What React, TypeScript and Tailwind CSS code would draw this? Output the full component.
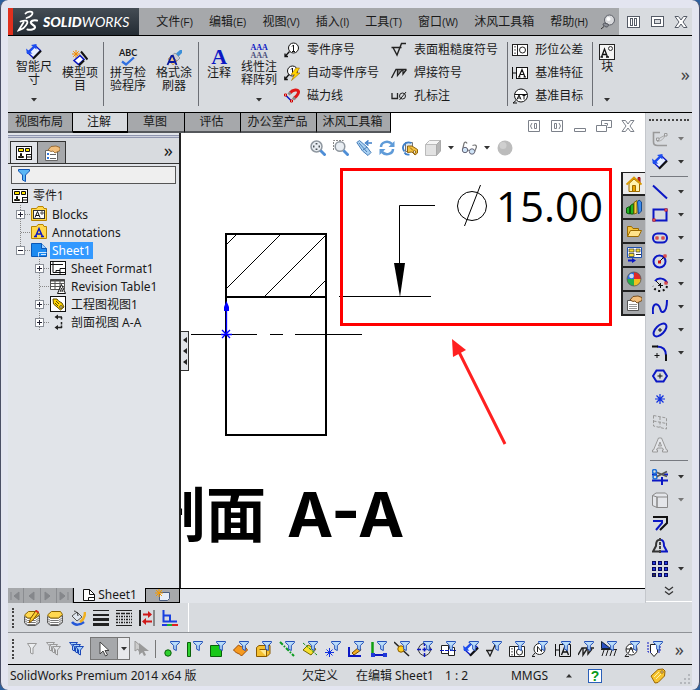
import type { ReactNode } from "react";
import clsx from "clsx";

const BLUE = "#0b17c4";

function Svg({ children, box = 16, className }: { children: ReactNode; box?: number; className?: string }) {
  return (
    <svg width={box} height={box} viewBox={`0 0 ${box} ${box}`} fill="none" aria-hidden="true" className={clsx("shrink-0", className)}>
      {children}
    </svg>
  );
}

function Caret({ muted }: { muted?: boolean }) {
  return (
    <svg width="6" height="4" viewBox="0 0 6 4" aria-hidden="true" className="shrink-0">
      <path d="M0 0h6L3 3.500z" fill={muted ? "#777" : "#333"} />
    </svg>
  );
}

function Grip({ across }: { across?: boolean }) {
  return <span className={clsx("shrink-0 border-dotted border-[#444]", across ? "w-10 border-t-2" : "h-5 border-l-2")} />;
}

const dimension = (
  <>
    <path d="M1.500 8.500 9 1.500l5.500 5L7.500 14z" fill="#e8f0ff" stroke={BLUE} strokeWidth="1.300" />
    <path d="m3 8 6-6" stroke="#1d4ef0" strokeWidth="2.200" />
    <path d="M0 4.500 1 10l5.500-.5zM5 1l5.500-1v5.500z" fill="#1d4ef0" />
    <path d="m7 14.800 8-8" stroke="#111" strokeWidth="2.200" />
  </>
);

/* ---------- title bar ---------- */

const menus = [
  ["文件", "(F)"],
  ["编辑", "(E)"],
  ["视图", "(V)"],
  ["插入", "(I)"],
  ["工具", "(T)"],
  ["窗口", "(W)"],
  ["沐风工具箱", ""],
  ["帮助", "(H)"],
];

function WindowGlyph({ kind }: { kind: "panes" | "restore" | "close" }) {
  return (
    <Svg box={14}>
      {kind === "panes" && (
        <g stroke="#555b66">
          <rect x=".5" y="1.500" width="12" height="11" fill="#fff" />
          <rect x="3.500" y="3.500" width="2" height="7" />
          <rect x="7.500" y="3.500" width="2" height="7" />
        </g>
      )}
      {kind === "restore" && (
        <g stroke="#555b66">
          <rect x=".5" y="1.500" width="12" height="10" fill="#fff" />
          <rect x="3.500" y="4.500" width="6" height="4" fill="#d7dade" />
        </g>
      )}
      {kind === "close" && (
        <path d="M1 1.500h3.500L7 5l2.500-3.500H13L9 7l4 5.500H9.500L7 9l-2.500 3.500H1L5 7z" fill="#fff" stroke="#555b66" />
      )}
    </Svg>
  );
}

function TitleBar() {
  return (
    <header className="flex h-7 border-b border-black bg-[#a6a8ab]">
      <div className="flex shrink-0 items-center border-l-[5px] border-[#e0301e] bg-linear-to-b from-[#454d55] to-[#242c34] pr-2.5 pl-1">
        <svg width="22" height="23" viewBox="0 0 22 23" fill="none" stroke="#fff" strokeLinecap="round" aria-hidden="true">
          <path d="M8.500 3.500C10 1.500 15.500.8 15.500 3 15.500 5 12.500 7 9.500 8" strokeWidth="1.800" />
          <path d="M3.500 11.500c5-1.800 8-1 6.500 2.200C8.500 17 5 19.500 1.500 20.500L6.500 12.500" strokeWidth="1.800" />
          <path d="M20 10.500c-4-.8-6.500.5-6 2.500.5 2 4.500 2.300 4 4.500-.5 2-4.500 2.600-7.500 2" strokeWidth="2.200" />
        </svg>
        <span className="ml-1 font-['Lato',sans-serif] text-sm text-white italic">
          <b className="font-black">SOLID</b>WORKS
        </span>
      </div>
      <nav className="flex flex-1 items-center gap-4 pl-[17px]">
        {menus.map(([name, key]) => (
          <button key={name} className="whitespace-nowrap">
            {name}
            <span className="font-['Liberation_Sans',sans-serif] text-[10px]">{key}</span>
          </button>
        ))}
        <button aria-label="固定菜单" className="-ml-1">
          <Svg>
            <circle cx="9.500" cy="6" r="5" fill="#d9dadd" stroke="#5d6068" />
            <circle cx="8.500" cy="5" r="2" fill="#fff" />
            <path d="M6 9.500c-2-1-3 0-3 1.500l3 2c2 0 3-1 2-3z" fill="#8d9098" stroke="#55585f" />
            <path d="m4 12.500-3 2.500" stroke="#333" />
          </Svg>
        </button>
      </nav>
      <div className="flex w-[73px] shrink-0 items-center justify-between bg-[#d8dbdf] pr-1 pl-2">
        <button aria-label="最小化"><WindowGlyph kind="panes" /></button>
        <button aria-label="还原"><WindowGlyph kind="restore" /></button>
        <button aria-label="关闭"><WindowGlyph kind="close" /></button>
      </div>
    </header>
  );
}

/* ---------- ribbon ---------- */

function BigButton({ icon, lines, menu, low }: { icon: ReactNode; lines: string[]; menu?: boolean; low?: boolean }) {
  return (
    <button className={clsx("flex h-full shrink-0 flex-col items-center leading-[13px]", low ? "pt-3.5" : "pt-2")}>
      <span className="flex h-4 items-end justify-center">{icon}</span>
      {lines.map((line) => (
        <span key={line} className="whitespace-nowrap">{line}</span>
      ))}
      {menu && <span className="mt-auto pb-2.5"><Caret /></span>}
    </button>
  );
}

function SmallButton({ icon, label }: { icon: ReactNode; label: string }) {
  return (
    <button className="flex h-[23px] items-center gap-[7px] whitespace-nowrap">
      {icon}
      {label}
    </button>
  );
}

const Divider = () => <span className="h-16 w-px shrink-0 self-center bg-[#6c6f75]" />;

const balloonIcon = (
  <Svg>
    <circle cx="9.500" cy="6" r="5" fill="#fff" stroke="#111" />
    <path d="M8 4.500 9.500 3v6.500M8 9.500h3" stroke="#111" />
    <path d="M5.500 9.500 1 14.500m0-3v3h3" stroke="#111" strokeWidth="1.300" />
  </Svg>
);
const autoBalloonIcon = (
  <Svg>
    <circle cx="8.500" cy="6" r="5" fill="#fff" stroke="#111" />
    <path d="M7 4.500 8.500 3v6" stroke="#111" />
    <path d="M5 9.500.800 14.500m0-3v3h3" stroke="#111" strokeWidth="1.300" />
    <path d="m12 3-5 6.500h3.500l-3 6L16 8h-3.500L15.500 3z" fill="#ffd400" stroke="#a06a00" strokeWidth=".6" />
  </Svg>
);
const magnetIcon = (
  <Svg>
    <path d="m1.500 7 6 6" stroke={BLUE} strokeWidth="1.500" />
    <path d="M6 5c3-4 8-3.500 8.500-1.500.4 2.500-2 4.500-4.500 7" stroke="#e01818" strokeWidth="3" />
    <path d="m4.500 6.500 2-2M9 11.500l2-2" stroke="#888" strokeWidth="3" />
    <path d="M.5 6h2v2h-2zM6.500 12h2v2h-2z" fill="#fff" stroke="#c00" />
  </Svg>
);
const surfaceIcon = (
  <Svg>
    <path d="M.5 5.500h10M2 5.500 6 13l4.500-11.500H15" stroke="#222" strokeWidth="1.400" />
  </Svg>
);
const weldIcon = (
  <Svg>
    <path d="M.5 13 5 4.500h10.500M6.500 4.500v6l5-6M12 4.500v4.500l3.500-4.500" stroke="#222" strokeWidth="1.300" />
    <path d="M7 5h3l-3 4z" fill="#777" />
  </Svg>
);
const holeIcon = (
  <Svg>
    <path d="M1 5v5.500h5.500V5" stroke="#222" strokeWidth="1.300" />
    <circle cx="11.500" cy="8" r="3" stroke="#222" />
    <path d="m8.500 12 6.500-8" stroke="#222" />
  </Svg>
);
const toleranceIcon = (
  <Svg>
    <rect x=".5" y="2.500" width="15" height="11" fill="#fff" stroke="#222" />
    <path d="M5.500 2.500v11M3 4v1.500M3 7.200v1.500M3 10.500V12" stroke="#222" />
    <circle cx="10.500" cy="8" r="3" stroke="#222" />
  </Svg>
);
const datumIcon = (
  <Svg>
    <path d="M.5 2v12M.5 8h4" stroke="#111" />
    <rect x="4.500" y="2.500" width="11" height="11" fill="#fff" stroke="#111" />
    <path d="m7 12 3-7.500 3 7.500M8 9.500h4M6 12h2.500M11.500 12H14" stroke="#111" strokeWidth="1.200" />
  </Svg>
);
const targetIcon = (
  <Svg>
    <circle cx="9" cy="7.500" r="6.500" fill="#fff" stroke="#111" />
    <path d="M3 6.500h12M5 11.500l2-4.500 2 4.500M5.700 10h2.600M12 7.500v4M10.500 7.500h3" stroke="#111" />
    <path d="m4 12.500-3 2.500h4" stroke="#111" />
  </Svg>
);

function Ribbon() {
  return (
    <div className="flex h-[77px] items-stretch border-b border-black bg-[#d8dbdf] pl-2" role="toolbar" aria-label="注解工具">
      <div className="flex gap-2.5">
        <BigButton icon={<Svg>{dimension}</Svg>} lines={["智能尺", "寸"]} menu />
        <BigButton
          low
          icon={
            <Svg>
              <path d="M4 0v8M0 4h8M1.200 1.200l5.600 5.600M6.800 1.200 1.200 6.800" stroke="#f08a00" />
              <path d="m2 10.500 6-5 4 4-5.500 5z" fill="#fff" stroke={BLUE} strokeWidth="1.600" />
              <path d="m9 1.500 6.500 8M7 15.500l5-5" stroke="#111" strokeWidth="2" />
            </Svg>
          }
          lines={["模型项", "目"]}
        />
      </div>
      <span className="w-[5px]" />
      <Divider />
      <div className="flex gap-2.5 px-1.5">
        <BigButton
          low
          icon={
            <span className="flex flex-col items-center">
              <span className="font-['Lato',sans-serif] text-[9px] leading-[8px] font-bold">ABC</span>
              <svg width="14" height="9" viewBox="0 0 14 9" fill="none" aria-hidden="true">
                <path d="m1 4.500 4 3L13 .5" stroke="#2f6fe0" strokeWidth="2.200" />
              </svg>
            </span>
          }
          lines={["拼写检", "验程序"]}
        />
        <BigButton
          low
          icon={
            <Svg>
              <path d="m10 3.500 4-3.500h2v3l-3.500 3.500z" fill="#3c8fd8" />
              <path d="m5 6 4-3 5 5-3 3z" fill="#c9cdd4" stroke="#7b828c" strokeWidth=".7" />
              <path d="m5 6 6 5-4 4-5-6z" fill="#f0c98a" stroke="#a77b3b" strokeWidth=".6" />
              <path d="m1.500 15 4-9h1.500l3.500 9M3.500 12h5" stroke="#0a1a9c" strokeWidth="1.800" />
            </Svg>
          }
          lines={["格式涂", "刷器"]}
        />
      </div>
      <Divider />
      <div className="flex gap-2.5 pr-[7px] pl-2">
        <BigButton
          low
          icon={<span className="font-['Liberation_Serif',serif] text-[22px] leading-[18px] font-bold text-[#0b17c4]">A</span>}
          lines={["注释"]}
        />
        <BigButton
          icon={
            <span className="flex flex-col font-['Liberation_Serif',serif] text-[8px] leading-[8px] font-bold text-[#0b17c4]">
              <span>AAA</span>
              <span className="text-[#4a4f7c]">AAA</span>
            </span>
          }
          lines={["线性注", "释阵列"]}
          menu
        />
      </div>
      <div className="flex flex-col pt-0.5">
        <SmallButton icon={balloonIcon} label="零件序号" />
        <SmallButton icon={autoBalloonIcon} label="自动零件序号" />
        <SmallButton icon={magnetIcon} label="磁力线" />
      </div>
      <div className="flex flex-col pt-0.5 pr-[9px] pl-3">
        <SmallButton icon={surfaceIcon} label="表面粗糙度符号" />
        <SmallButton icon={weldIcon} label="焊接符号" />
        <SmallButton icon={holeIcon} label="孔标注" />
      </div>
      <Divider />
      <div className="flex flex-col pt-0.5 pr-[9px] pl-1">
        <SmallButton icon={toleranceIcon} label="形位公差" />
        <SmallButton icon={datumIcon} label="基准特征" />
        <SmallButton icon={targetIcon} label="基准目标" />
      </div>
      <Divider />
      <div className="px-1.5">
        <BigButton
          icon={
            <Svg>
              <rect x=".5" y=".5" width="15" height="15" fill="#f4f4f4" stroke="#222" />
              <path d="m2.500 13 3-8 3 8M3.500 10.500h4M1.500 13h2.500M7 13h3" stroke="#111" strokeWidth="1.300" />
              <circle cx="11.500" cy="4.500" r="2" stroke="#333" />
            </Svg>
          }
          lines={["块"]}
          menu
        />
      </div>
      <button aria-label="更多" className="ml-auto self-center pr-0.5 text-lg leading-none text-[#444]">»</button>
    </div>
  );
}

/* ---------- command tabs ---------- */

const tabs = ["视图布局", "注解", "草图", "评估", "办公室产品", "沐风工具箱"];
const tabWidths = ["w-[65px]", "w-[55px]", "w-[57px]", "w-14", "w-[76px]", "w-[74px]"];

function CommandTabs() {
  return (
    <div className="flex h-5 items-stretch bg-white">
      <div className="flex" role="tablist">
        {tabs.map((tab, i) => (
          <button
            key={tab}
            role="tab"
            aria-selected={i === 1}
            className={clsx(
              "border-r border-b-2 border-r-black pr-0.5 leading-4 whitespace-nowrap",
              tabWidths[i],
              i === 1 ? "border-b-black bg-[#d8dbdf]" : "border-b-[#55585c] bg-[#a6a8ab]",
            )}
          >
            {tab}
          </button>
        ))}
      </div>
      <div className="ml-auto flex items-end gap-[9px] pr-2.5 text-[#7c818a]">
        <button aria-label="左侧窗格">
          <Svg box={14}><path d="M1.500 1.500h11v11h-11zM5 4 3.500 7 5 10M7.500 4.500h2v5h-2z" stroke="currentColor" /></Svg>
        </button>
        <button aria-label="右侧窗格">
          <Svg box={14}><path d="M1.500 1.500h11v11h-11zM9 4l1.500 3L9 10M4.500 4.500h2v5h-2z" stroke="currentColor" /></Svg>
        </button>
        <button aria-label="最小化文档">
          <Svg box={14}><path d="M1.500 9.500h11v3h-11z" stroke="currentColor" /></Svg>
        </button>
        <button aria-label="还原文档">
          <Svg box={16}><path d="M5.500 8.500v-5h10v7h-4M.5 8.500h10v6H.500zM8.500 6.500h3v2" stroke="currentColor" /></Svg>
        </button>
        <button aria-label="关闭文档">
          <Svg box={14}>
            <path d="M1 1.500h3.500L7 5l2.500-3.500H13L9 7l4 5.500H9.500L7 9l-2.500 3.500H1L5 7z" fill="#fff" stroke="currentColor" />
          </Svg>
        </button>
      </div>
    </div>
  );
}

/* ---------- feature tree ---------- */

const drawingIcon = (
  <Svg>
    <rect x=".5" y="1.500" width="15" height="13" fill="#fff" stroke="#111" />
    <path d="M2.500 3.500h5v3h-5zM9.500 3.500h4v3h-4zM4.500 8.500v3h-2v1h5v-1h-2v-3z" fill="#ffe500" stroke="#111" />
    <path d="M10.500 9.500h5M10.500 9v5.500M10.500 12h5" stroke="#111" />
  </Svg>
);
const folderShape = <path d="M.5 2.500h5l1.500-2h5l1 2h2.500v12H.500z" fill="#ffd84d" stroke="#b98500" />;

const treeIcons: Record<string, ReactNode> = {
  blocks: (
    <Svg>
      {folderShape}
      <rect x="2.500" y="4.500" width="11" height="8" fill="#fff" stroke="#333" />
      <path d="m4 11.500 2.500-6 2.500 6M5 9.500h3" stroke="#111" />
      <circle cx="11" cy="7" r="1.200" stroke="#111" strokeWidth=".8" />
    </Svg>
  ),
  notes: (
    <Svg>
      {folderShape}
      <path d="m4.500 12.500 3.500-8 3.500 8M5.500 10h5M3 12.500h3M10 12.500h3" stroke={BLUE} strokeWidth="1.500" />
    </Svg>
  ),
  sheet: (
    <Svg>
      <path d="M.5 1.500h10l5 5v8H.500z" fill="#1c8af0" stroke="#0b57b5" />
      <path d="M10.500 1.500v5h5" fill="#9fd0ff" stroke="#0b57b5" />
      <path d="M7.500 14.500v-4h8M10 12.500h5" stroke="#cfe6ff" />
    </Svg>
  ),
  format: (
    <Svg>
      <rect x=".5" y="1.500" width="15" height="13" fill="#fff" stroke="#111" />
      <path d="M3 1v11.500h3v-2h4v-2h6M0 4.500h13M6 12.500h10M10 10.500v4" stroke="#111" />
    </Svg>
  ),
  revision: (
    <Svg>
      <path d="M.5 1.500h14v10H.500z" fill="#fff" stroke="#555" />
      <path d="M0 2.500h15" stroke="#444" strokeWidth="2" />
      <path d="M5 2v10M10 2v10M0 5.500h15M0 8.500h15" stroke="#555" />
      <path d="m7.500 15.500 4-9 4 9z" fill="#fff" stroke="#111" />
      <path d="m10 14 1.500-4 1.500 4M10.500 13h2" stroke="#111" strokeWidth=".8" />
    </Svg>
  ),
  view: (
    <Svg>
      <rect x=".5" y=".5" width="15" height="15" fill="#fff" stroke="#111" />
      <path d="M3 3h4l1.500 2L12 7l2 4-3.500 3L7 11 3.500 8z" fill="#ffd500" stroke="#5d4900" />
      <path d="m6 5 3 3M5 7l3 3" stroke="#5d4900" />
      <circle cx="11" cy="11" r="1.300" fill="#fff" stroke="#5d4900" />
    </Svg>
  ),
  section: (
    <Svg>
      <path d="M12 3H6.500M12 13.500H6.500" stroke="#222" strokeWidth="1.500" />
      <path d="M4.500 3 8 .5v5zM4.500 13.500 8 11v5z" fill="#222" />
      <path d="M11.500 3v3M11.500 8v6" stroke="#222" strokeWidth="1.500" strokeDasharray="2.500 1" />
    </Svg>
  ),
};

interface Node {
  icon: string;
  label: string;
  sign?: "+" | "-";
  selected?: boolean;
  deep?: boolean;
}

const nodes: Node[] = [
  { icon: "blocks", label: "Blocks", sign: "+" },
  { icon: "notes", label: "Annotations" },
  { icon: "sheet", label: "Sheet1", sign: "-", selected: true },
  { icon: "format", label: "Sheet Format1", sign: "+", deep: true },
  { icon: "revision", label: "Revision Table1", deep: true },
  { icon: "view", label: "工程图视图1", sign: "+", deep: true },
  { icon: "section", label: "剖面视图 A-A", sign: "+", deep: true },
];

function TreeRow({ node }: { node: Node }) {
  return (
    <li className={clsx("flex h-[18px] items-center", node.deep ? "pl-[26px]" : "pl-[7px]")}>
      <svg width="16" height="18" viewBox="0 0 16 18" fill="none" aria-hidden="true" className="shrink-0">
        <path d={node.sign === "-" ? "M5.500 0v9" : "M5.500 0v18"} stroke="#888" strokeDasharray="1 1" />
        <path d="M6 9.500h10" stroke="#888" strokeDasharray="1 1" />
        {node.sign && (
          <>
            <rect x="1.500" y="5.500" width="8" height="8" fill="#fff" stroke="#8a8f98" />
            <path d={node.sign === "+" ? "M3 9.500h5M5.500 7v5" : "M3 9.500h5"} stroke="#223" />
          </>
        )}
      </svg>
      {treeIcons[node.icon]}
      <span className={clsx("ml-[3px] px-0.5 leading-[17px] whitespace-nowrap", node.selected && "bg-[#3399ff] text-white")}>
        {node.label}
      </span>
    </li>
  );
}

function FeaturePanel() {
  return (
    <aside className="flex w-[173px] shrink-0 flex-col border-r-2 border-[#222] bg-[#e1e4e9]">
      <div className="mt-0.5 h-[3px] border-y border-[#8f95ae] bg-[#cfd3e0]" />
      <div className="flex h-[26px] items-end border-b border-[#333] bg-[#d8dbdf] pl-0.5" role="tablist">
        <button role="tab" aria-selected="true" aria-label="工程图" className="flex h-[22px] w-7 items-center justify-center border-x border-t border-[#333] bg-[#e1e4e9]">
          {drawingIcon}
        </button>
        <button role="tab" aria-selected="false" aria-label="属性" className="flex h-[22px] w-7 items-center justify-center border-t border-r border-[#333] bg-[#a6a8ab]">
          <Svg>
            <path d="M1.500 5.500h12v10h-12z" fill="#fff" stroke="#666" />
            <path d="M6 9.500h6M6 13.500h6" stroke="#666" />
            <path d="M3 8h2v2H3zM3 12h2v2H3z" fill="#3476d8" />
            <path d="M4 5 7 1.500 12 1l4 1.500v3L11 8 9 6 7 6.500z" fill="#f2bf7d" stroke="#8a5a20" strokeWidth=".8" />
          </Svg>
        </button>
        <button aria-label="展开" className="mr-1.5 ml-auto pb-1 text-lg leading-none">»</button>
      </div>
      <label className="mx-[3px] mt-0.5 flex h-[18px] items-center border border-[#555] bg-[#efefef] pl-1">
        <Svg><path d="M2.500 2.500h11v1.500L9.500 8v6.500l-3-1.500V8l-4-4z" fill="#5ab6f5" stroke="#1356b4" /></Svg>
        <input aria-label="筛选" className="w-full min-w-0 bg-transparent pl-1 outline-none" />
      </label>
      <div className="mt-[3px] flex h-[18px] items-center gap-[5px] pl-1">
        {drawingIcon}
        <span>零件1</span>
      </div>
      <ul>
        {nodes.map((node) => <TreeRow key={node.label} node={node} />)}
      </ul>
    </aside>
  );
}

/* ---------- drawing canvas ---------- */

function Drawing() {
  return (
    <svg width="464" height="455" viewBox="181 133 464 455" fill="none" className="absolute top-0 left-0">
      <g stroke="#000" strokeWidth="2">
        <rect x="226" y="234" width="100" height="201" />
        <path d="M226 297h100" />
      </g>
      <path d="m227 244 9-9M227 288l53-53M264 297l62-62M309 297l17-17" stroke="#000" />
      <path d="M191 334.500h66M270 334.500h13M295 334.500h67" stroke="#000" />
      <path d="M226.500 334v-26M222 330l8 8M230 330l-8 8M221 334.500h11" stroke="#0000ff" strokeWidth="1.300" />
      <path d="m226.500 301 2.500 6v4h-5v-4z" fill="#0000ff" />

      <path d="M435 205.500h-35.500V263M339 296.500h92" stroke="#000" />
      <path d="M394 263h11l-5 34z" fill="#000" />
      <circle cx="472" cy="206" r="14.500" stroke="#000" />
      <path d="m480.500 185-16 41" stroke="#000" />
      <text x="496" y="222" fontSize="42" fill="#000" className="font-['Open_Sans',sans-serif]">15.00</text>

      <rect x="341.500" y="169.500" width="269" height="155" stroke="#ff0000" strokeWidth="3" />
      <path d="m505 444-46-92" stroke="#ff2020" strokeWidth="3" />
      <path d="m452 339 14 11-13 7z" fill="#ff2020" />

      <text x="146" y="537" fontSize="60" fontWeight="700" fill="#000" className="font-['Noto_Sans_CJK_SC',sans-serif]">剖面</text>
      <text x="287" y="537" fontSize="62" fontWeight="700" fill="#000" className="font-['Inter',sans-serif]">A-A</text>
    </svg>
  );
}

const viewTools: { label: string; icon: ReactNode; menu?: boolean }[] = [
  {
    label: "整屏显示",
    icon: (
      <Svg>
        <circle cx="6.500" cy="6.500" r="5.500" fill="#e9eef3" stroke="#8f979f" strokeWidth="1.500" />
        <path d="M6.500 3v1.500M6.500 8.500V10M3 6.500h1.500M8.500 6.500H10" stroke="#4d5359" strokeWidth="1.800" />
        <path d="m10.500 10.500 5 5" stroke="#4f8ed6" strokeWidth="2.800" />
      </Svg>
    ),
  },
  {
    label: "局部放大",
    icon: (
      <Svg>
        <path d="M.5 10V.5h10" stroke="#888" strokeDasharray="2 1" />
        <circle cx="7" cy="6.500" r="4.800" fill="#e9eef3" stroke="#8f979f" strokeWidth="1.500" />
        <path d="m10.500 10.500 5 5" stroke="#4f8ed6" strokeWidth="2.800" />
      </Svg>
    ),
  },
  {
    label: "上一视图",
    icon: (
      <Svg>
        <path d="m.8 2.500 2.700-2L11 7l4 5.500-3 3L6.500 11z" fill="#a8d0f2" stroke="#4a7fb8" />
        <path d="m3 3 8 9M7 10l4-3" stroke="#4a7fb8" />
        <path d="M16 3h-5M12.500.5 9.500 3l3 2.500" stroke="#3f7fc8" strokeWidth="1.500" />
      </Svg>
    ),
  },
  {
    label: "旋转视图",
    icon: (
      <Svg>
        <path d="M2 7c0-5 7-7 11-3M14 9c0 5-7 7-11 3" stroke="#5f9bd8" strokeWidth="2.500" />
        <path d="M15.500 1v6h-6zM.5 15V9h6z" fill="#5f9bd8" />
      </Svg>
    ),
  },
  {
    label: "三维工程图",
    icon: (
      <Svg>
        <path d="M3.500 2.500h7v9h-7z" fill="#dfe8f0" stroke="#777" />
        <path d="M2.500 11.500c-4-5 1-11 7-8.500M2.500 12.500c1 2 3 2.500 5 2" stroke="#3f7fc8" strokeWidth="1.800" />
        <path d="M5.500 6h4.500l5.500 3.500V13L13 15l-3-3-4.500.5z" fill="#f5c242" stroke="#8f6410" />
        <path d="m8 7.500 3 3" stroke="#8f6410" />
        <circle cx="12.500" cy="12" r="1.300" fill="#fff" stroke="#8f6410" />
      </Svg>
    ),
  },
  {
    label: "显示样式",
    menu: true,
    icon: (
      <Svg>
        <path d="m.5 4.500 4-4h11l-4 4z" fill="#f4f4f4" stroke="#bbb" />
        <path d="M.5 4.500h11v11H.500z" fill="#e2e2e2" stroke="#bbb" />
        <path d="m11.500 4.500 4-4v10.500l-4 4.500z" fill="#b5b5b5" stroke="#aaa" />
      </Svg>
    ),
  },
  {
    label: "隐藏项目",
    menu: true,
    icon: (
      <Svg>
        <path d="M1.500 10 3 3.500C3.500 1.500 5.500 2 6 3.500M13.500 12l2-5c0-2-2-2.500-4-1.500M6.500 10l2 .5" stroke="#777" strokeWidth="1.200" />
        <circle cx="4" cy="10" r="2.700" fill="#cfe4f7" stroke="#667" />
        <circle cx="11" cy="11.500" r="2.700" fill="#cfe4f7" stroke="#667" />
      </Svg>
    ),
  },
  {
    label: "外观",
    icon: (
      <Svg>
        <circle cx="8" cy="8" r="7.500" fill="#bcbcbc" />
        <circle cx="6" cy="5.500" r="3.500" fill="#cfcfcf" />
      </Svg>
    ),
  },
];

const paneIcons: { label: string; icon: ReactNode }[] = [
  {
    label: "资源",
    icon: (
      <Svg>
        <path d="M12 1.500h2V7h-2z" fill="#e03030" stroke="#901010" />
        <path d="M3 7.500 8 3l5.500 4.500v8H3z" fill="#fff2b0" stroke="#9c6b00" />
        <path d="m.5 8.500 7.500-7 7.500 7" stroke="#d99a00" strokeWidth="1.800" />
        <path d="M6.500 9.500h3v6h-3z" fill="#e8a200" stroke="#9c6b00" />
      </Svg>
    ),
  },
  {
    label: "设计库",
    icon: (
      <Svg>
        <path d="m.5 9 3-1.500V15l-3-1zM4.500 6.500l3-2V15h-3z" fill="#22b422" stroke="#0b5a0b" />
        <path d="m8 3.500 3-2V14l-3 1z" fill="#f3d040" stroke="#80650a" />
        <path d="m11.500 3 1.500-2 2.500 2V12l-3 3z" fill="#3d8cf0" stroke="#164b91" />
      </Svg>
    ),
  },
  {
    label: "文件探索器",
    icon: (
      <Svg>
        <path d="M1.500 13.500v-10h4l1.500 2h5.500v3" fill="#f5c542" stroke="#9c6b00" />
        <path d="m1.500 13.500 3-6h11l-3 6z" fill="#ffe38a" stroke="#9c6b00" />
      </Svg>
    ),
  },
  {
    label: "视图调色板",
    icon: (
      <Svg>
        <path d="M1.500.5h14v10h-14z" fill="#fff" stroke="#1d4fb0" />
        <path d="M3 2h5v3H3zM10 2h4v3h-4zM3 6.500h5v3H3z" fill="#f5dc30" stroke="#333" strokeWidth=".7" />
        <path d="M10 7.500h5" stroke="#333" />
        <path d="M2 13.500h5" stroke={BLUE} strokeWidth="2" />
        <path d="m6 11 4 2.500L6 16z" fill={BLUE} />
      </Svg>
    ),
  },
  {
    label: "外观、布景",
    icon: (
      <Svg>
        <path d="M8 8V1a7 7 0 0 0-7 7z" fill="#2a6fe0" />
        <path d="M8 8V1a7 7 0 0 1 7 7z" fill="#e02828" />
        <path d="M8 8H1a7 7 0 0 0 7 7z" fill="#24b04a" />
        <path d="M8 8h7a7 7 0 0 1-7 7z" fill="#f0c020" />
        <circle cx="5.500" cy="5" r="2.300" fill="#fff" opacity=".75" />
        <circle cx="8" cy="8" r="7" stroke="#555" strokeWidth=".8" />
      </Svg>
    ),
  },
  {
    label: "自定义属性",
    icon: (
      <Svg>
        <path d="M1.500 5.500h11v10h-11z" fill="#fff" stroke="#555" />
        <path d="M3 9.500h8M3 11.500h8M3 13.500h8" stroke="#999" />
        <path d="M4 5 7 1.500 12 1l4 1.500v3L11 8 9 6 7 6.500z" fill="#f2bf7d" stroke="#6f4310" strokeWidth=".9" />
      </Svg>
    ),
  },
];

function Canvas() {
  return (
    <main className="relative min-w-0 flex-1 overflow-hidden bg-white">
      <Drawing />
      <div className="relative flex items-center justify-center gap-[7px] pt-[7px] pr-1" role="toolbar" aria-label="视图工具">
        {viewTools.map((tool) => (
          <button key={tool.label} aria-label={tool.label} className="flex items-center gap-[7px]">
            {tool.icon}
            {tool.menu && <Caret />}
          </button>
        ))}
      </div>
      <button aria-label="折叠面板" className="absolute top-[198px] left-0 flex h-10 w-2 flex-col items-center justify-around border-y border-r border-[#333] bg-[#e1e4e9] py-0.5">
        {[0, 1, 2].map((i) => (
          <svg key={i} width="4" height="6" viewBox="0 0 4 6" aria-hidden="true"><path d="M4 0v6L0 3z" fill="#222" /></svg>
        ))}
      </button>
      <div className="absolute top-[39px] right-0 flex w-6 flex-col" role="tablist" aria-label="任务窗格">
        {paneIcons.map((pane, i) => (
          <button
            key={pane.label}
            role="tab"
            aria-selected={i === 0}
            aria-label={pane.label}
            className={clsx("flex h-6 items-center justify-center border-b-2 border-l-2 border-[#222]", i === 0 ? "border-t bg-[#ececec]" : "bg-[#a6a8ab]")}
          >
            {pane.icon}
          </button>
        ))}
      </div>
    </main>
  );
}

/* ---------- sketch toolbar ---------- */

const handle = (x: number, y: number) => <rect x={x - 1} y={y - 1} width="2" height="2" fill="#fff" stroke="#d01010" />;

interface Tool {
  label: string;
  icon: ReactNode;
  menu?: boolean;
  muted?: boolean;
}

const sketchTop: Tool[] = [
  {
    label: "草图",
    menu: true,
    muted: true,
    icon: (
      <>
        <path d="M8 1.500H1.500V11c0 2.500 1.500 3.500 4 3.500h9.500" stroke="#999" strokeWidth="1.600" />
        <path d="m6 8 7.500-4M5 10.500c3-.5 6-1 8-6" stroke="#aaa" />
        <path d="M4.500 7h2.500v2.500H4.500zM12.500 2.500H15V5h-2.500z" fill="#e4e6ea" stroke="#999" />
      </>
    ),
  },
  { label: "智能尺寸", menu: true, icon: dimension },
];
const sketchMiddle: Tool[] = [
  { label: "直线", menu: true, icon: <path d="m1 1.500 14 13" stroke={BLUE} strokeWidth="2" /> },
  { label: "矩形", menu: true, icon: <><rect x="1.500" y="2.500" width="13" height="11" stroke={BLUE} strokeWidth="2" />{handle(14, 3)}{handle(2, 13)}</> },
  { label: "槽口", menu: true, icon: <><rect x="1" y="3.500" width="14" height="9" rx="4.500" stroke={BLUE} strokeWidth="2" />{handle(5, 8)}{handle(11, 8)}</> },
  { label: "圆", menu: true, icon: <><circle cx="7.500" cy="8.500" r="6" stroke={BLUE} strokeWidth="2" /><path d="m8 8 5-5" stroke="#111" />{handle(7.5, 9)}{handle(13, 3)}</> },
  { label: "圆弧", menu: true, icon: <><path d="M3 5c3-4 10-3 12 2" stroke={BLUE} strokeWidth="2" /><path d="m4 5 5 5M6 9.500h5M8.500 7v5" stroke="#111" /><path d="M15 10c-1 6-12 7-14 0" stroke="#111" strokeWidth="2" strokeDasharray="2 2.500" />{handle(14, 7)}</> },
  { label: "样条曲线", menu: true, icon: <path d="M1 15C0 6 3 4 6 6s2 8 5 7 4-4 4-12" stroke={BLUE} strokeWidth="2" /> },
  { label: "椭圆", menu: true, icon: <><ellipse cx="8" cy="8" rx="8" ry="4.300" transform="rotate(-45 8 8)" stroke={BLUE} strokeWidth="2" /><path d="M6 8h4M8 6v4" stroke="#111" /></> },
  { label: "圆角", menu: true, icon: <><path d="M5 1.500c6 0 9 3 9 9" stroke={BLUE} strokeWidth="2" /><path d="M0 1.500h6M14 9.500V16" stroke="#111" strokeWidth="2" /><path d="M2.500 10.500h5M5 8v5" stroke="#111" /></> },
  { label: "多边形", icon: <><path d="M4.500 2.500h7L15 8l-3.500 5.500h-7L1 8z" stroke={BLUE} strokeWidth="2" /><path d="M5.500 8h5M8 5.500v5" stroke="#111" /></> },
  { label: "点", icon: <path d="M8 3v10M3 8h10M4.500 4.500l7 7M11.500 4.500l-7 7" stroke="#1030e0" strokeWidth="1.200" /> },
  { label: "基准面", muted: true, icon: <path d="M1.500 1.500 14.500 4v11l-13-3zM8 3v10.500M1.500 7l13 2.500" stroke="#999" strokeDasharray="3 1.500" /> },
  { label: "文字", muted: true, icon: <path d="M6.500 1h3l5 12h1v2h-5v-2h1l-1-2h-5l-1 2h1v2h-5v-2h1zM8 5 6.500 9h3z" fill="#e4e6ea" stroke="#999" /> },
];
const sketchBottom: Tool[] = [
  { label: "剪裁", menu: true, icon: <><path d="M0 5.500h5M12 5.500h4M0 11.500h16M10 8v8" stroke={BLUE} strokeWidth="2" /><circle cx="2.500" cy="2.500" r="2" stroke="#1c70d8" strokeWidth="1.500" /><circle cx="3" cy="8" r="2" stroke="#1c70d8" strokeWidth="1.500" /><path d="m5 7.500 10-5M5 3.500l10 4" stroke="#555" strokeWidth="1.800" /></> },
  { label: "转换实体引用", menu: true, muted: true, icon: <path d="M.5 3.500 5 5v10.500L.500 13.500zM.5 3.500 4 1h9.500l2 2v9.500M5 5h10.500v10.500H5z" fill="#e4e6ea" stroke="#888" /> },
  { label: "等距实体", icon: <><path d="M1 2h14v6l-7 7" stroke="#111" strokeWidth="2" /><path d="M1 6h9v2l-6 7" stroke={BLUE} strokeWidth="2" /></> },
  { label: "镜向实体", icon: <><path d="M7 2C4 2 4 5 4 8l-3 5.500h6" stroke="#333" strokeWidth="2" /><path d="M9 2c3 0 3 3 3 6l3 5.500H9" stroke={BLUE} strokeWidth="2" /><path d="M8 0v16" stroke="#111" strokeWidth="1.500" strokeDasharray="3 1" /></> },
  {
    label: "线性阵列",
    menu: true,
    icon: [1, 7, 13].map((y) => [1, 7, 13].map((x) => <rect key={`${x}-${y}`} x={x - 0.5} y={y - 0.5} width="3" height="3" fill={x === 1 && y === 13 ? "#333" : "#2038d8"} stroke="#0a0a60" />)),
  },
];

function SketchGroup({ tools }: { tools: Tool[] }) {
  return tools.map((tool) => (
    <button key={tool.label} aria-label={tool.label} className="flex h-[23px] items-center gap-2.5 pl-1.5">
      <Svg>{tool.icon}</Svg>
      {tool.menu && <Caret muted={tool.muted} />}
    </button>
  ));
}

function SketchToolbar() {
  return (
    <div className="flex w-[47px] shrink-0 flex-col border-l border-[#c4c7cc] bg-[#d8dbdf]" role="toolbar" aria-label="草图工具">
      <div className="flex h-3.5 items-center justify-center"><Grip across /></div>
      <SketchGroup tools={sketchTop} />
      <div className="mx-1 my-[3px] h-px bg-[#777a80]" />
      <SketchGroup tools={sketchMiddle} />
      <div className="mx-1 my-1 h-px bg-[#777a80]" />
      <SketchGroup tools={sketchBottom} />
      <button aria-label="更多工具" className="flex h-[22px] items-center justify-center border-b border-white">
        <Svg box={10}><path d="m1 1 4 3 4-3M1 5.500l4 3 4-3" stroke="#333" strokeWidth="1.300" /></Svg>
      </button>
    </div>
  );
}

/* ---------- bottom area ---------- */

const navPaths = ["M3 3v8M11 3 6 7l5 4z", "M10 3 5 7l5 4z", "M4 3l5 4-5 4z", "M3 3l5 4-5 4zM11 3v8"];

function SheetTabs() {
  return (
    <div className="flex h-[15px] shrink-0 bg-[#e1e4e9]">
      <div className="flex w-[65px] bg-[#a6a8ab]">
        {navPaths.map((d, i) => (
          <button key={d} aria-label={`图纸导航 ${i + 1}`} className="flex-1 border-r border-[#8b8d91]">
            <Svg box={14}><path d={d} fill="#85878b" stroke="#85878b" /></Svg>
          </button>
        ))}
      </div>
      <button className="flex w-[73px] items-center justify-center gap-0.5 border-x border-b border-black bg-[#e1e4e9] leading-[14px]">
        <Svg box={14}>
          <path d="M1.500 1.500h6l5 5v6h-11z" fill="#fff" stroke="#111" />
          <path d="M7.500 1.500v5h5M6.500 12.500v-3h6" stroke="#111" />
        </Svg>
        Sheet1
      </button>
      <button aria-label="添加图纸" className="flex w-[34px] items-center justify-center border-y border-r border-black bg-[#a6a8ab]">
        <svg width="16" height="13" viewBox="0 0 16 13" fill="none" aria-hidden="true">
          <path d="M4.500 3.500h10v6l-2 2h-8z" fill="#e8eef8" stroke="#4a5d80" />
          <path d="M4 0v8M0 4h8M1 1l6 6M7 1 1 7" stroke="#f59a00" />
        </svg>
      </button>
      <div className="flex-1 border-t border-black" />
    </div>
  );
}

const layerBox = (
  <>
    <path d="M.5 6.500V13l3 2.500h8l4-3V5.500l-4 2.500h-8z" fill="#fff" stroke="#555" />
    <path d="m.5 8.500 3 2h8l4-3M.5 10.500l3 2h8l4-3M.5 12.500l3 2h8l4-3" stroke="#777" />
    <path d="m.5 5 4-3.500h9l2 3-4 3.500h-8z" fill="#ffd850" stroke="#8a6400" />
  </>
);

const lineTools: Tool[] = [
  { label: "图层属性", icon: <>{layerBox}<path d="m5 13 1.500-4.500L12 .5l2.500 2L9 10z" fill="#ffcf30" stroke="#7a4d00" /><path d="m11.500.5 3 2" stroke="#d83020" strokeWidth="2" /></> },
  { label: "更改图层", icon: layerBox },
  { label: "线色", icon: <><path d="m2 6 5-4 5 5-5 4z" fill="#dfe6ee" stroke="#555" /><path d="M4 1c2 0 4 2 4 5" stroke="#333" /><path d="M2 12c3 4 8 3 12 0" stroke="#2458d8" strokeWidth="2.500" /><path d="M15 2c0 5-2 8-5 10" stroke="#f0b020" strokeWidth="2.500" /></> },
  { label: "线粗", icon: <path d="M0 0h16v1H0zM0 4h16v2H0zM0 8h16v3H0zM0 13h16v3H0z" fill="#222" /> },
  { label: "线条样式", icon: <><path d="M0 .5h16M0 15.500h16" stroke="#222" /><path d="M0 3.500h16" stroke="#222" strokeWidth="1.500" strokeDasharray="4 1" /><path d="M0 6.500h16M0 9.500h16M0 12.500h16" stroke="#222" strokeWidth="1.500" strokeDasharray="2 1 1 1" /></> },
  { label: "隐藏边线", icon: <><path d="M1 0v16" stroke="#222" strokeWidth="2" /><path d="M15 0v16" stroke="#888" strokeWidth="2" /><path d="M4 4.500h7M6 11.500h7" stroke="#d01818" strokeWidth="2" /><path d="M9 1l4 3.500L9 8zM7 8l-4 3.500L7 15z" fill="#d01818" /></> },
  { label: "颜色显示", icon: <><path d="M1.500 0v11.500H8M2 5.500h6v6H15" stroke="#1840e0" strokeWidth="2" /><path d="M0 15h5" stroke="#2038e0" strokeWidth="2" /><path d="M5 15h5" stroke="#18b030" strokeWidth="2" /><path d="M10 15h6" stroke="#e02020" strokeWidth="2" /></> },
];

const funnel = <path d="M6.500.5h9v1l-3.200 3v5l-2.600-1.300V4.500l-3.200-3z" fill="#b9dcfa" stroke="#2350b8" />;

const filters: Tool[] = [
  { label: "过滤顶点", icon: <circle cx="4" cy="12" r="3.200" fill="#2fd02f" stroke="#0a600a" /> },
  { label: "过滤边线", icon: <path d="M.5 1.500h3v14h-3z" fill="#2fd02f" stroke="#0a600a" /> },
  { label: "过滤面", icon: <path d="M.5 4.500h11v11H.500z" fill="#18c818" stroke="#0a600a" /> },
  { label: "过滤曲面实体", icon: <path d="m.5 9 5-5c2 2 4 2 6 1l3 4-6 6c-2-3-5-2-8-6z" fill="#f59a20" stroke="#a04c00" /> },
  { label: "过滤实体", icon: <><path d="M.5 6.500 3 4.500h11v8l-3 3H.500z" fill="#f5c030" stroke="#8a5a00" /><path d="M3.500 8.500h7v7" fill="#ffe890" stroke="#8a5a00" /></> },
  { label: "过滤基准轴", icon: <path d="m1 1 14 14" stroke="#0c9c20" strokeWidth="2" strokeDasharray="4 1.500 1.500 1.500" /> },
  { label: "过滤基准面", icon: <><path d="m1 9 5-5 8 4-5 6z" fill="#f7e030" stroke="#7a6a00" /><path d="m1 2 14 12" stroke="#138a20" strokeDasharray="3 1" /></> },
  { label: "过滤草图点", icon: <path d="M4.500 7v9M0 11.500h9M1.500 8.500l6 6M7.500 8.500l-6 6" stroke="#1030e0" /> },
  { label: "过滤草图", icon: <><path d="M1 6v9h12" stroke={BLUE} strokeWidth="2" /><path d="m4 12 7-6 2 3-7 5z" fill="#f5b020" stroke="#7a4d00" /></> },
  { label: "过滤草图线段", icon: <><path d="M1.500 1v12" stroke="#12a012" strokeWidth="2.500" /><path d="M2 14h12" stroke={BLUE} strokeWidth="2" /><path d="M12 12h4v4h-4zM0 12h4v4H0z" fill="#2038d8" /></> },
  { label: "过滤中点", icon: <><path d="m0 1 15 14" stroke="#222" strokeWidth="1.500" /><circle cx="7" cy="8" r="3.200" fill="#ffd020" stroke="#8a5a00" /></> },
  { label: "过滤中心符号线", icon: <><circle cx="7.500" cy="8.500" r="6" stroke="#333" /><path d="M7.500 1v15M0 8.500h15" stroke={BLUE} strokeDasharray="4 1.500" strokeWidth="1.500" /></> },
  { label: "过滤中心线", icon: <><path d="M1.500 4.500h7v8h-7zM8.500 6.500h6v8h-6z" stroke="#222" fill="#fff" /><path d="M0 9.500h16" stroke={BLUE} strokeDasharray="4 1" /></> },
  { label: "过滤尺寸", icon: dimension },
  { label: "过滤表面粗糙度", icon: <path d="M0 9.500h6M1 9.500 4 15l5-11" stroke="#222" strokeWidth="1.300" /> },
  { label: "过滤形位公差", icon: <><path d="M.5 5.500h15v10H.500z" fill="#fff" stroke="#222" /><path d="M5.500 5.500v10M3 7v1.500M3 10v1.500M3 13v1.500" stroke="#222" /><circle cx="10.500" cy="11" r="3" stroke="#222" /></> },
  { label: "过滤注释", icon: <><circle cx="7.500" cy="8" r="5.500" fill="#fff" stroke="#222" /><path d="M5.500 11V5.500l4 5V6M3 12l-3 3.500h3" stroke="#222" /></> },
  { label: "过滤基准特征", icon: <><path d="M.5 3v12M.5 9h4M4.500 3.500h11v12h-11z" stroke="#111" /><path d="m6.500 14 3.500-9 3.500 9M8 11h4" stroke="#111" strokeWidth="1.300" /></> },
  { label: "过滤焊接符号", icon: <path d="M0 14 4 7h12M5 7v7l4-6M10 7v6l4-5" stroke="#222" strokeWidth="1.400" /> },
  { label: "过滤装饰螺纹线", icon: <><path d="M.5.5v7h9z" fill="#2a50c0" stroke="#123" /><path d="M0 8.500h16M3 9l-2 6M7 9l-2 6M11 9l-2 6M15 9l-2 6" stroke="#222" /></> },
  { label: "过滤基准目标", icon: <><circle cx="7.500" cy="8.500" r="5.500" fill="#fff" stroke="#222" /><path d="M2 8h11M4.500 12 7 6l2.500 6M3 13l-2 2.500h4" stroke="#222" /></> },
  { label: "过滤销钉", icon: <><path d="M3.500 3.500v8l3.500 4 3.500-4v-8z" fill="#fff" stroke="#222" /><path d="M1 1v10h3M13 5v6h-3" stroke={BLUE} strokeDasharray="2 1" /></> },
];

function stackedFunnels(color: string, fill: string) {
  return [0, 3, 6].map((n) => <path key={n} d={`M${n + 0.5} ${n / 1.5 + 1.5}h8l-3 3.500v5l-2-1v-4z`} fill={fill} stroke={color} />);
}

const filterModes: Tool[] = [
  { label: "过滤器", icon: <path d="M4.500 2.500h9L10 7v6l-2.500-1V7z" fill="#eceef0" stroke="#999" /> },
  { label: "清除过滤器", icon: stackedFunnels("#999", "#e4e6ea") },
  { label: "所有过滤器", icon: stackedFunnels("#1c48b8", "#a5d0f8") },
];

function IconButton({ tool }: { tool: Tool }) {
  return (
    <button aria-label={tool.label} className="flex w-[23px] shrink-0 items-center justify-center">
      <Svg>{tool.icon}</Svg>
    </button>
  );
}

const arrowPath = "M4 1v12l3-3 2.500 5 2-1L9 9.500h4z";

function BottomToolbars() {
  return (
    <>
      <div className="flex h-[29px] bg-[#d8dbdf]">
        <div className="flex items-stretch border-r border-white pr-[7px] pl-1" role="toolbar" aria-label="线型">
          <span className="flex w-2 items-center"><Grip /></span>
          {lineTools.map((tool) => <IconButton key={tool.label} tool={tool} />)}
        </div>
      </div>
      <div className="flex h-[33px] items-stretch border-t border-b border-t-[#8f9297] border-b-black bg-[#dfe1e5] pl-1" role="toolbar" aria-label="选择过滤器">
        <span className="flex w-[7px] items-center"><Grip /></span>
        {filterModes.map((tool) => <IconButton key={tool.label} tool={tool} />)}
        <div className="my-1 ml-0.5 flex w-10 border border-[#777]">
          <button aria-label="选择" aria-pressed="true" className="flex flex-1 items-center justify-center bg-[#a6a8ab]">
            <Svg><path d={arrowPath} fill="#fff" stroke="#444" /></Svg>
          </button>
          <button aria-label="选择方式" className="flex w-3 items-center justify-center border-l border-[#777] bg-[#e8e9ec]"><Caret /></button>
        </div>
        <button aria-label="放大选择" className="flex w-6 items-center justify-center">
          <Svg>
            <path d="M1 0v10l3-2 2 4 2-1-2-4h3z" fill="#ccc" stroke="#999" />
            <path d="M5 2v12l3-3 2 4 2-1-2-4h5z" fill="#999" />
          </Svg>
        </button>
        <span className="mr-1 ml-px h-[18px] w-px self-center bg-[#777]" />
        {filters.map((tool) => <IconButton key={tool.label} tool={{ label: tool.label, icon: <>{tool.icon}{funnel}</> }} />)}
        <button aria-label="更多过滤器" className="mr-2 ml-auto text-lg leading-none text-[#444]">»</button>
      </div>
    </>
  );
}

function StatusBar() {
  return (
    <footer className="flex h-[21px] items-center bg-[#d8dbdf] pl-0.5 whitespace-nowrap">
      <span className="w-[292px]">SolidWorks Premium 2014 x64 版</span>
      <span className="w-[54px]">欠定义</span>
      <span className="w-[89px]">在编辑 Sheet1</span>
      <span>1 : 2</span>
      <button className="ml-auto flex items-center gap-[18px]">
        MMGS
        <svg width="6" height="4" viewBox="0 0 6 4" aria-hidden="true"><path d="M0 3.500h6L3 0z" fill="#333" /></svg>
      </button>
      <button aria-label="帮助" className="ml-4 flex h-3.5 w-3.5 items-center justify-center border border-[#2a5fb8] bg-white font-['Liberation_Sans',sans-serif] text-sm leading-none font-bold text-[#0c9a20]">?</button>
      <button aria-label="标签" className="ml-12">
        <Svg>
          <path d="M1 8 8 1.500l5-.5 2 2-.5 5L8 14.500 5 15z" fill="#f7c530" stroke="#9a6500" />
          <path d="m4 9 5-5M6 11l5-5" stroke="#fff2a8" />
          <circle cx="12" cy="4" r="1.200" fill="#fff" stroke="#9a6500" />
        </Svg>
      </button>
      <Svg box={12} className="ml-3.5 self-end">
        <path d="M8 0h2v2H8zM8 4h2v2H8zM4 4h2v2H4zM8 8h2v2H8zM4 8h2v2H4zM0 8h2v2H0z" fill="#b4b7bc" />
      </Svg>
    </footer>
  );
}

export default function App() {
  return (
    <div className="min-h-screen bg-[#2c5f9e] font-['Noto_Sans','Noto_Sans_CJK_SC',sans-serif] text-xs text-[#1a1a1a]">
      <div className="flex min-h-screen flex-col rounded-lg border-x border-[#4a4f66] bg-[#e3e5f0] px-[7px] pt-2 pb-1">
        <TitleBar />
        <Ribbon />
        <div className="flex min-h-0 flex-1">
          <div className="flex min-w-0 flex-1 flex-col">
            <CommandTabs />
            <div className="flex min-h-0 flex-1">
              <FeaturePanel />
              <Canvas />
            </div>
            <SheetTabs />
          </div>
          <SketchToolbar />
        </div>
        <BottomToolbars />
        <StatusBar />
      </div>
    </div>
  );
}
